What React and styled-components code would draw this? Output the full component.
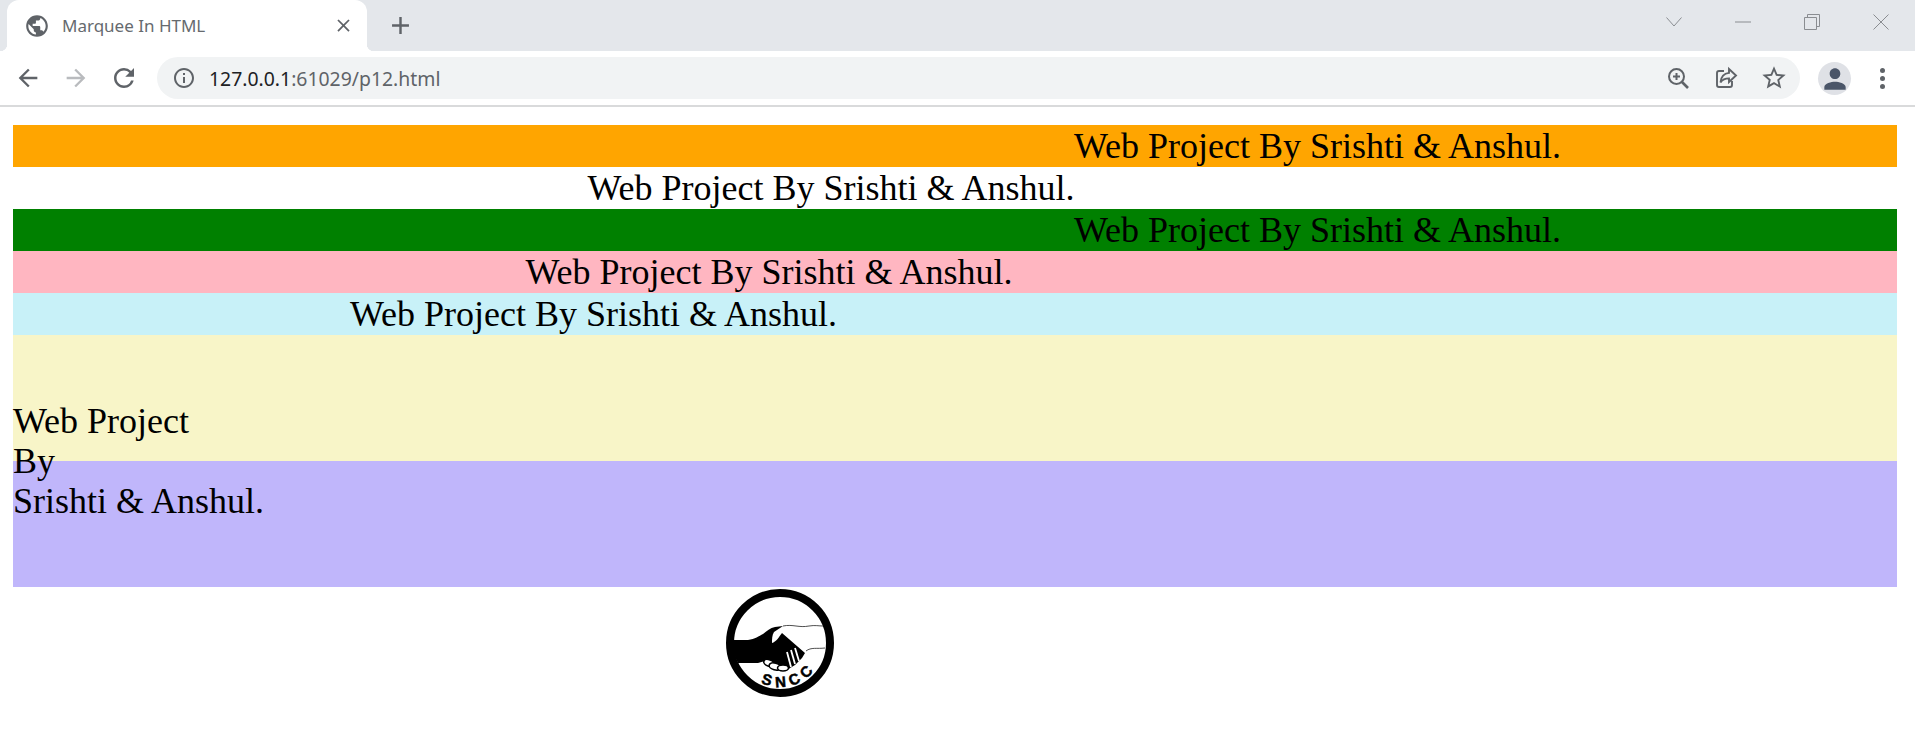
import styled, { createGlobalStyle } from "styled-components";
import {
  MdPublic,
  MdClose,
  MdAdd,
  MdArrowBack,
  MdArrowForward,
  MdRefresh,
  MdInfoOutline,
  MdStarBorder,
  MdPerson,
} from "react-icons/md";

const GlobalStyle = createGlobalStyle`
  html, body {
    margin: 0;
    padding: 0;
    height: 751px;
    overflow: hidden;
    background: #fff;
  }
`;

const Page = styled.div`
  display: flex;
  flex-direction: column;
  width: 1915px;
  height: 751px;
  font-family: "Noto Sans", "Open Sans", sans-serif;
`;

// browser window chrome
const TabStrip = styled.div`
  display: flex;
  align-items: flex-start;
  height: 51px;
  padding-left: 7px;
  background: #e4e7eb;
`;

const Tab = styled.div`
  position: relative;
  display: flex;
  align-items: center;
  width: 360px;
  height: 51px;
  padding: 0 13px 0 17px;
  box-sizing: border-box;
  border-radius: 12px 12px 0 0;
  background: #fff;
  color: #5f6368;

  &::before,
  &::after {
    content: "";
    position: absolute;
    bottom: 0;
    width: 7px;
    height: 7px;
  }
  &::before {
    left: -7px;
    background: radial-gradient(circle at 0 0, #e4e7eb 7px, #fff 7.5px);
  }
  &::after {
    right: -7px;
    background: radial-gradient(circle at 100% 0, #e4e7eb 7px, #fff 7.5px);
  }
`;

const TabTitle = styled.span`
  flex: 1;
  margin-left: 12px;
  font-size: 17px;
  color: #666a6e;
`;

const NewTab = styled.div`
  display: flex;
  align-items: center;
  justify-content: center;
  width: 32px;
  height: 51px;
  margin-left: 17px;
  color: #5f6368;
`;

const WindowControls = styled.div`
  display: flex;
  margin-left: auto;
`;

const WindowButton = styled.div`
  display: flex;
  align-items: center;
  justify-content: center;
  width: 69px;
  height: 44px;
  color: #8a8d91;
`;

const Toolbar = styled.div`
  display: flex;
  align-items: center;
  height: 54px;
  padding: 0 17px 0 4px;
  background: #fff;
`;

const NavButton = styled.div`
  display: flex;
  align-items: center;
  justify-content: center;
  width: 48px;
  height: 48px;
  color: ${(p) => (p.$disabled ? "#b9bbbe" : "#5f6368")};
`;

const AddressBar = styled.div`
  display: flex;
  align-items: center;
  flex: 1;
  height: 42px;
  margin-left: 9px;
  padding: 0 2px 0 15px;
  border-radius: 21px;
  background: #f1f3f4;
  color: #5f6368;
`;

const Url = styled.div`
  flex: 1;
  margin-left: 13px;
  font-size: 19.4px;
  color: #5f6368;
`;

const Host = styled.span`
  color: #202124;
`;

const BarIcon = styled.div`
  display: flex;
  align-items: center;
  justify-content: center;
  width: 48px;
  height: 42px;
  color: #5f6368;
`;

const Avatar = styled.div`
  display: flex;
  align-items: flex-end;
  justify-content: center;
  width: 33px;
  height: 33px;
  margin-left: 18px;
  border-radius: 50%;
  background: #dfe1e6;
  color: #4a5568;
  overflow: hidden;
`;

const MenuDots = styled.div`
  display: flex;
  flex-direction: column;
  align-items: center;
  gap: 3px;
  width: 32px;
  margin-left: 15px;
`;

const Dot = styled.span`
  width: 5px;
  height: 5px;
  border-radius: 50%;
  background: #5f6368;
`;

const Divider = styled.div`
  height: 2px;
  background: #d9dadb;
`;

// page content
const Content = styled.main`
  display: flex;
  flex-direction: column;
  padding: 18px 18px 0 13px;
  font-family: "Liberation Serif", "Times New Roman", serif;
  font-size: 36px;
  color: #000;
`;

const Marquee = styled.div`
  height: 42px;
  padding-left: ${(p) => p.$offset}px;
  line-height: 42px;
  white-space: nowrap;
  background: ${(p) => p.$bg};
`;

const VerticalPair = styled.div`
  position: relative;
`;

const Band = styled.div`
  height: 126px;
  background: ${(p) => p.$bg};
`;

const VerticalText = styled.div`
  position: absolute;
  top: 66px;
  left: 0;
  line-height: 40px;
`;

const LogoRow = styled.div`
  padding: 1px 0 0 712px;
`;

const Logo = () => (
  <svg width="110" height="110" viewBox="0 0 110 110">
    <circle cx="55" cy="55" r="50" fill="#fff" stroke="#000" strokeWidth="8" />
    <path
      d="M7 52 L23 52 C30 51 34 48 38 46 C42 43 45 40 50 39 L58 38 L49 44 C47 47 47 51 47 55 C51 54 54 49 57 45 L80 65 L77 70 L70 77 L62 82 C56 83 48 78 40 73 L33 75 L13 75 C9 68 7 60 7 52 Z"
      fill="#000"
    />
    <g fill="#fff" stroke="#000" strokeWidth="1.6">
      <ellipse cx="44" cy="75" rx="5.5" ry="3.2" transform="rotate(20 44 75)" />
      <ellipse cx="50" cy="78.5" rx="6" ry="3.4" transform="rotate(15 50 78.5)" />
      <ellipse cx="58" cy="80" rx="5.5" ry="3" />
    </g>
    <g stroke="#fff" strokeWidth="1.8" fill="none">
      <path d="M66 79 L62 64" />
      <path d="M70 76 L66 62" />
      <path d="M74 73 L70 60" />
    </g>
    <g stroke="#222" strokeWidth="0.8" fill="none">
      <path d="M58 38 C68 36 74 40 84 38 C90 37 94 38 98 38" />
      <path d="M81 63 C86 59 92 61 100 60" />
    </g>
    <path id="sncc-arc" d="M36 94.7 A44 44 0 0 0 97 68" fill="none" />
    <text
      fontFamily="Liberation Sans, Arial, sans-serif"
      fontSize="15"
      fontWeight="700"
      letterSpacing="5"
      fill="#000"
      stroke="#000"
      strokeWidth="0.5"
    >
      <textPath href="#sncc-arc">SNCC</textPath>
    </text>
  </svg>
);

const message = "Web Project By Srishti & Anshul.";

const rows = [
  { bg: "#ffa500", offset: 1061 },
  { bg: "#ffffff", offset: 574.5 },
  { bg: "#008000", offset: 1061 },
  { bg: "#ffb6c1", offset: 512.5 },
  { bg: "#c8f1f8", offset: 337 },
];

export default function App() {
  return (
    <Page>
      <GlobalStyle />
      <TabStrip>
        <Tab>
          <MdPublic size={26} />
          <TabTitle>Marquee In HTML</TabTitle>
          <MdClose size={21} />
        </Tab>
        <NewTab>
          <MdAdd size={29} />
        </NewTab>
        <WindowControls>
          <WindowButton>
            <svg width="16" height="10" viewBox="0 0 16 10" fill="none" stroke="currentColor">
              <path d="M.5.5 8 9 15.5.5" />
            </svg>
          </WindowButton>
          <WindowButton>
            <svg width="16" height="2" viewBox="0 0 16 2" stroke="currentColor">
              <path d="M0 1h16" />
            </svg>
          </WindowButton>
          <WindowButton>
            <svg width="16" height="16" viewBox="0 0 16 16" fill="none" stroke="currentColor">
              <path d="M.5 3.5h12v12H.5zM3.5 3.5V.5h12v12h-3" />
            </svg>
          </WindowButton>
          <WindowButton>
            <svg width="16" height="16" viewBox="0 0 16 16" stroke="currentColor">
              <path d="M.5.5l15 15M15.5.5l-15 15" />
            </svg>
          </WindowButton>
        </WindowControls>
      </TabStrip>
      <Toolbar>
        <NavButton>
          <MdArrowBack size={28} />
        </NavButton>
        <NavButton $disabled>
          <MdArrowForward size={28} />
        </NavButton>
        <NavButton>
          <MdRefresh size={30} />
        </NavButton>
        <AddressBar>
          <MdInfoOutline size={24} />
          <Url>
            <Host>127.0.0.1</Host>:61029/p12.html
          </Url>
          <BarIcon>
            <svg width="24" height="24" viewBox="0 0 24 24" fill="none" stroke="currentColor" strokeWidth="2">
              <circle cx="10.5" cy="10.5" r="7.5" />
              <path d="M16 16l6 6" strokeWidth="2.6" />
              <path d="M10.5 7v7M7 10.5h7" />
            </svg>
          </BarIcon>
          <BarIcon>
            <svg width="24" height="24" viewBox="0 0 24 24" fill="none" stroke="currentColor" strokeWidth="1.9">
              <path d="M10 5H5a2 2 0 0 0-2 2v12a2 2 0 0 0 2 2h11a2 2 0 0 0 2-2v-4" />
              <path d="M15 3l7 6.5-7 6.5v-3.6c-4 0-6.5 1-8.5 4 .5-5 3.5-9 8.5-9.5z" />
            </svg>
          </BarIcon>
          <BarIcon>
            <MdStarBorder size={28} />
          </BarIcon>
        </AddressBar>
        <Avatar>
          <MdPerson size={32} />
        </Avatar>
        <MenuDots>
          <Dot />
          <Dot />
          <Dot />
        </MenuDots>
      </Toolbar>
      <Divider />
      <Content>
        {rows.map((row, i) => (
          <Marquee key={i} $bg={row.bg} $offset={row.offset}>
            {message}
          </Marquee>
        ))}
        <VerticalPair>
          <Band $bg="#f8f5c8" />
          <Band $bg="#c0b6fb" />
          <VerticalText>
            Web Project
            <br />
            By
            <br />
            Srishti &amp; Anshul.
          </VerticalText>
        </VerticalPair>
        <LogoRow>
          <Logo />
        </LogoRow>
      </Content>
    </Page>
  );
}
